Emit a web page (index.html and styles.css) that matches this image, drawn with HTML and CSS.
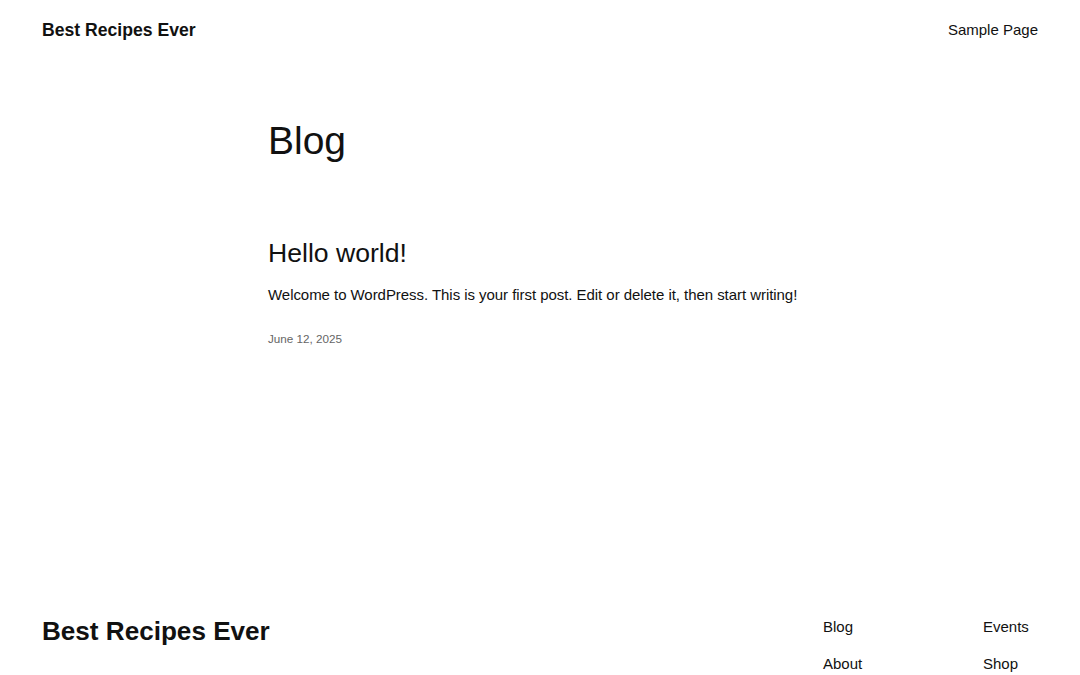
FILE: index.html
```html
<!DOCTYPE html>
<html lang="en">
<head>
<meta charset="utf-8">
<title>Blog – Best Recipes Ever</title>
<link rel="stylesheet" href="styles.css">
</head>
<body>
<header class="site-header">
  <a class="site-title" href="#">Best Recipes Ever</a>
  <nav class="header-nav"><a href="#">Sample Page</a></nav>
</header>
<main class="site-main">
  <h1 class="page-title">Blog</h1>
  <article class="post">
    <h2 class="post-title"><a href="#">Hello world!</a></h2>
    <p class="post-excerpt">Welcome to WordPress. This is your first post. Edit or delete it, then start writing!</p>
    <div class="post-date">June 12, 2025</div>
  </article>
</main>
<footer class="site-footer">
  <a class="footer-title" href="#">Best Recipes Ever</a>
  <nav class="footer-nav">
    <a href="#">Blog</a>
    <a href="#">Events</a>
    <a href="#">About</a>
    <a href="#">Shop</a>
  </nav>
</footer>
</body>
</html>
```
FILE: styles.css
```css
* { box-sizing: border-box; }
html, body { margin: 0; padding: 0; }
body {
  font-family: "Liberation Sans", Arial, sans-serif;
  color: #111111;
  background: #ffffff;
}
a { color: inherit; text-decoration: none; }

.site-header {
  display: flex;
  justify-content: space-between;
  align-items: center;
  padding: 18px 42px 0;
}
.site-title {
  font-size: 17.6px;
  font-weight: 700;
  line-height: 24px;
}
.header-nav a {
  font-size: 15px;
  line-height: 24px;
}

.site-main {
  width: 544px;
  margin: 0 auto;
  padding-top: 75.5px;
}
.page-title {
  margin: 0;
  font-size: 39px;
  font-weight: 400;
  line-height: 46px;
}
.post { margin-top: 73.3px; }
.post-title {
  margin: 0;
  font-size: 26.6px;
  font-weight: 400;
  line-height: 32px;
}
.post-excerpt {
  margin: 14px 0 0;
  font-size: 15px;
  line-height: 24px;
  letter-spacing: -0.05px;
  white-space: nowrap;
}
.post-date {
  margin-top: 23px;
  font-size: 11.7px;
  line-height: 18px;
  color: #666666;
}

.site-footer {
  display: flex;
  justify-content: space-between;
  align-items: flex-start;
  padding: 0 42px;
  margin-top: 267.5px;
}
.footer-title {
  font-size: 26.1px;
  font-weight: 700;
  line-height: 32px;
}
.footer-nav {
  display: grid;
  grid-template-columns: 160px 55px;
  row-gap: 17px;
  padding-top: 2px;
}
.footer-nav a {
  font-size: 15px;
  line-height: 20px;
}
```
